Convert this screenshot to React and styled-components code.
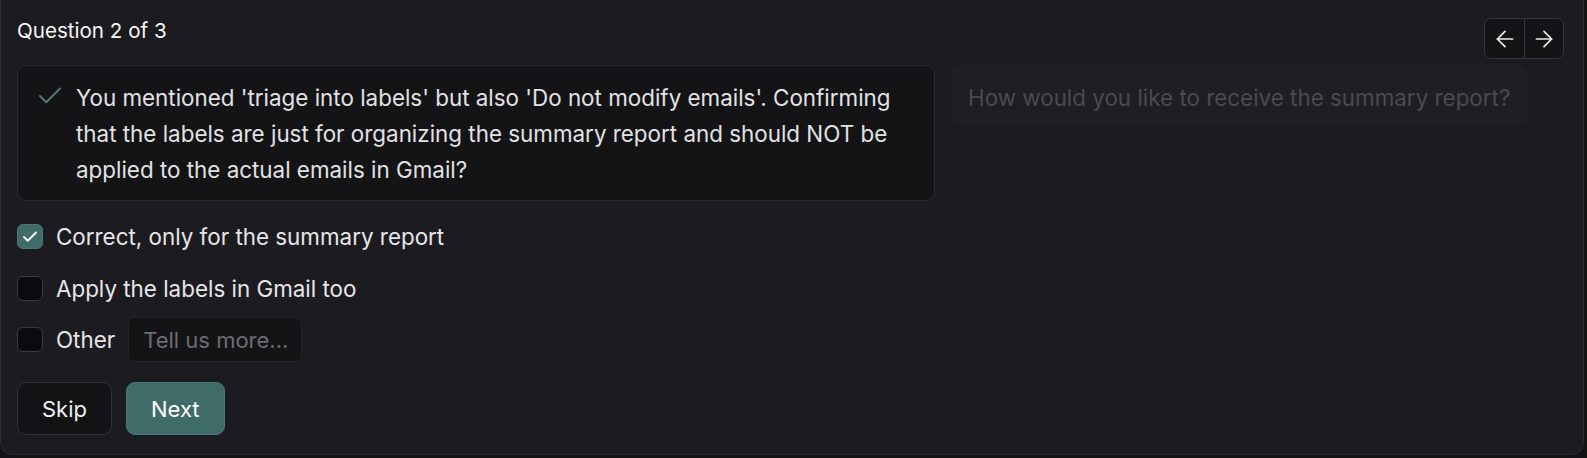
import React from 'react';
import styled, { createGlobalStyle } from 'styled-components';
import { Check, ArrowLeft, ArrowRight } from 'lucide-react';

const GlobalStyle = createGlobalStyle`
  html, body {
    margin: 0;
    padding: 0;
    background: #121214;
  }
  body {
    font-family: Inter, "Noto Sans", sans-serif;
    overflow: hidden;
  }
`;

const Page = styled.div`
  width: 1587px;
  height: 458px;
  overflow: hidden;
`;

const Panel = styled.div`
  box-sizing: border-box;
  width: 1584px;
  margin-top: -12px;
  padding: 29px 19px 19px 16px;
  background: #1c1b20;
  border: 1px solid #2b2a30;
  border-radius: 12px;
`;

const Header = styled.div`
  display: flex;
  justify-content: space-between;
  align-items: flex-start;
  height: 41px;
  margin-bottom: 6px;
`;

const Title = styled.h2`
  margin: 0;
  font-size: 20.6px;
  font-weight: 400;
  line-height: 26px;
  color: #f6f6f7;
`;

const NavGroup = styled.div`
  display: flex;
  border: 1px solid #38373d;
  border-radius: 7px;
  overflow: hidden;
`;

const NavButton = styled.button`
  display: flex;
  align-items: center;
  justify-content: center;
  width: 39px;
  height: 39px;
  padding: 0;
  background: #141416;
  color: #ececee;
  border: none;
  border-left: ${p => (p.$divided ? '1px solid #38373d' : 'none')};
  cursor: pointer;
`;

const Cards = styled.div`
  display: flex;
  align-items: flex-start;
  gap: 16px;
`;

const QuestionCard = styled.div`
  box-sizing: border-box;
  display: flex;
  gap: 11px;
  width: 918px;
  height: 136px;
  padding: 14px 18px 0 17px;
  background: #141416;
  border: 1px solid #2a2a2e;
  border-radius: 10px;

  svg {
    flex-shrink: 0;
    margin-top: 1px;
    color: #5d7775;
  }
`;

const QuestionText = styled.p`
  margin: 0;
  font-size: 22.4px;
  line-height: 36px;
  color: #e2e2e5;
`;

const GhostCard = styled.div`
  box-sizing: border-box;
  width: 577px;
  padding: 15px 17px 10px;
  background: #1f1e23;
  border-radius: 10px;
`;

const GhostText = styled.p`
  margin: 0;
  font-size: 22.4px;
  line-height: 36px;
  color: #4b4a50;
  white-space: nowrap;
`;

const Options = styled.div`
  display: flex;
  flex-direction: column;
  gap: 6.5px;
  margin-top: 13px;
`;

const OptionRow = styled.label`
  display: flex;
  align-items: center;
  gap: 13px;
  height: 45px;
  cursor: pointer;
`;

const Box = styled.span`
  box-sizing: border-box;
  display: flex;
  align-items: center;
  justify-content: center;
  width: 26px;
  height: 25px;
  border-radius: 6px;
  background: ${p => (p.$checked ? '#3f6b68' : '#0b0a0e')};
  border: 1px solid ${p => (p.$checked ? '#4a7774' : '#3b3a40')};
  color: #ffffff;
`;

const OptionLabel = styled.span`
  font-size: 22.4px;
  color: #e6e6e8;
`;

const MoreInput = styled.input`
  box-sizing: border-box;
  width: 174px;
  height: 45px;
  padding: 0 6px 0 14px;
  background: #141416;
  border: 1px solid #242428;
  border-radius: 7px;
  font-family: inherit;
  font-size: 22px;
  color: #e6e6e8;
  outline: none;

  &::placeholder {
    color: #6c6c72;
  }
`;

const Actions = styled.div`
  display: flex;
  gap: 14px;
  margin-top: 20px;
`;

const Button = styled.button`
  height: 53px;
  padding: 0 24px;
  border-radius: 9px;
  font-family: inherit;
  font-size: 22px;
  font-weight: 400;
  cursor: pointer;
  background: ${p => (p.$primary ? '#3f6b69' : '#131315')};
  border: 1px solid ${p => (p.$primary ? '#4b7876' : '#323236')};
  color: ${p => (p.$primary ? '#ffffff' : '#f0f0f0')};
`;

const options = [
  { label: 'Correct, only for the summary report', checked: true },
  { label: 'Apply the labels in Gmail too', checked: false },
];

export default function App() {
  return (
    <Page>
      <GlobalStyle />
      <Panel>
        <Header>
          <Title>Question 2 of 3</Title>
          <NavGroup>
            <NavButton aria-label="Previous">
              <ArrowLeft size={26} strokeWidth={1.6} />
            </NavButton>
            <NavButton $divided aria-label="Next question">
              <ArrowRight size={26} strokeWidth={1.6} />
            </NavButton>
          </NavGroup>
        </Header>

        <Cards>
          <QuestionCard>
            <Check size={30} strokeWidth={1.5} />
            <QuestionText>
              You mentioned 'triage into labels' but also 'Do not modify emails'. Confirming that the
              labels are just for organizing the summary report and should NOT be applied to the
              actual emails in Gmail?
            </QuestionText>
          </QuestionCard>
          <GhostCard>
            <GhostText>How would you like to receive the summary report?</GhostText>
          </GhostCard>
        </Cards>

        <Options>
          {options.map(o => (
            <OptionRow key={o.label}>
              <Box $checked={o.checked}>{o.checked && <Check size={18} strokeWidth={2.4} />}</Box>
              <OptionLabel>{o.label}</OptionLabel>
            </OptionRow>
          ))}
          <OptionRow>
            <Box />
            <OptionLabel>Other</OptionLabel>
            <MoreInput placeholder="Tell us more..." />
          </OptionRow>
        </Options>

        <Actions>
          <Button>Skip</Button>
          <Button $primary>Next</Button>
        </Actions>
      </Panel>
    </Page>
  );
}
